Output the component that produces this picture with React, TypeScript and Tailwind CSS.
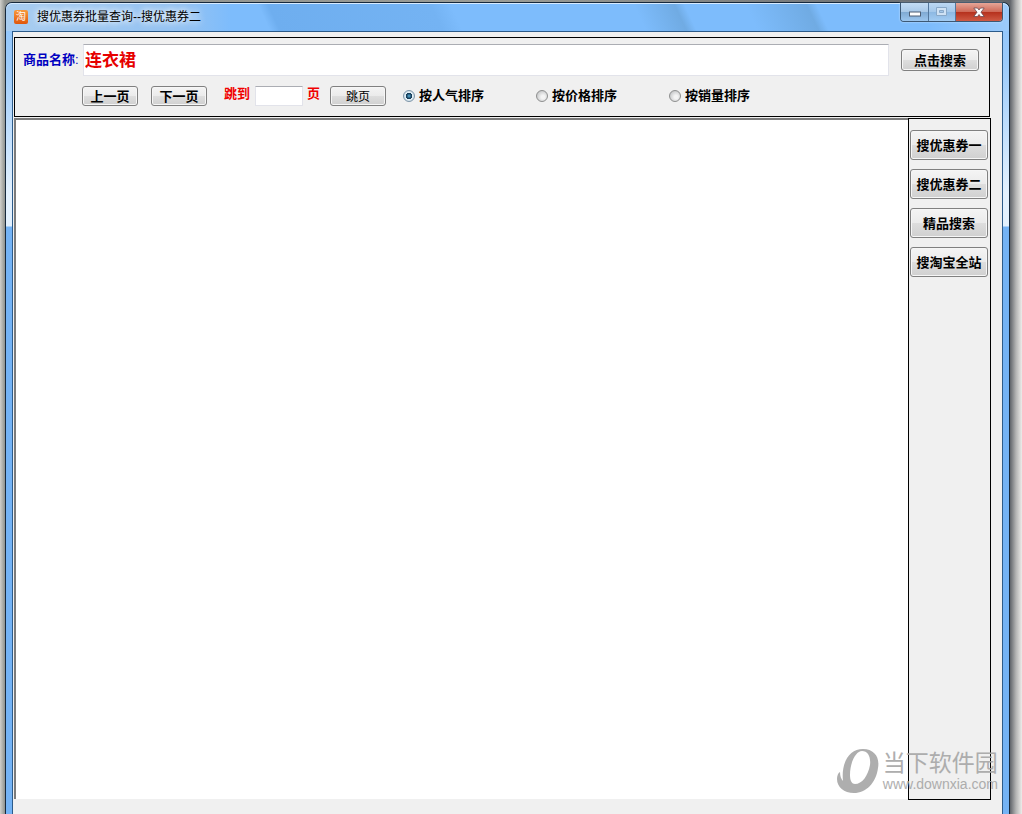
import { useState } from 'react';
import type { ReactNode } from 'react';

const SORT_OPTIONS = [
  { value: 'popularity', label: '按人气排序' },
  { value: 'price', label: '按价格排序' },
  { value: 'sales', label: '按销量排序' },
];

const SITES = ['搜优惠券一', '搜优惠券二', '精品搜索', '搜淘宝全站'];

// ── Classic push button ───────────────────────────────────────────────────────
function PushButton({ className, children }: { className: string; children: ReactNode }) {
  return (
    <button
      type="button"
      className={`flex shrink-0 items-center justify-center whitespace-nowrap rounded-[3px] border border-[#808080] bg-[linear-gradient(#f4f4f4,#ebebeb_50%,#dedede_50%,#d0d0d0)] pt-px leading-none text-black shadow-[inset_0_0_0_1px_#f6f6f6] ${className}`}
    >
      {children}
    </button>
  );
}

// ── Title bar ─────────────────────────────────────────────────────────────────
function TitleBar() {
  return (
    <header className="flex h-7 shrink-0 items-start">
      <span className="ml-2 mt-[7px] flex h-[14px] w-[14px] items-center justify-center rounded-[2px] bg-[linear-gradient(#f79a3e,#e0560a)] text-[10px] leading-none text-white">
        淘
      </span>
      <h1 className="ml-[9px] mt-[5px] flex-1 text-xs leading-[18px] text-black [text-shadow:0_0_6px_#fff,0_0_8px_#fff]">
        搜优惠券批量查询--搜优惠券二
      </h1>
      <div className="mr-[6px] flex h-[19px] w-[103px] overflow-hidden rounded-b-[4px] border border-t-0 border-[#3c5874] shadow-[0_0_2px_#d8ecff]">
        <button
          type="button"
          aria-label="最小化"
          className="flex w-7 items-center justify-center border-r border-[#54779c] bg-[linear-gradient(#c3dcf4,#a9c9e8_48%,#7fa9d2_50%,#9cc6ee)]"
        >
          <svg width="14" height="6" viewBox="0 0 14 6" className="mt-1">
            <rect x="1.5" y="1" width="11" height="4" fill="#fff" stroke="#4f5f75" />
          </svg>
        </button>
        <button
          type="button"
          aria-label="最大化"
          className="flex w-[27px] items-center justify-center border-r border-[#54779c] bg-[linear-gradient(#bcd8f3,#a4c8ea_48%,#8cb8e2_50%,#a3ccf2)]"
        >
          <svg width="12" height="10" viewBox="0 0 12 10">
            <path d="M.5.5h10v8H.5z M3.500 3.500h4v2h-4z" fill="#cfe2f4" fillRule="evenodd" stroke="#88a8c8" />
          </svg>
        </button>
        <button
          type="button"
          aria-label="关闭"
          className="flex flex-1 items-center justify-center bg-[linear-gradient(#e5a698,#cf6a58_48%,#b5301c_50%,#cf5a44)]"
        >
          <svg width="12" height="11" viewBox="0 0 12 11">
            <path
              d="M.8 1h3.700L6 3 7.500 1h3.700L8 5.200l3.200 4.300H7.500L6 7.500 4.500 9.500H.8L4 5.200z"
              fill="#fff"
              stroke="#6b4a50"
              strokeWidth=".8"
            />
          </svg>
        </button>
      </div>
    </header>
  );
}

// ── Search form ───────────────────────────────────────────────────────────────
function SearchPanel() {
  const [keyword, setKeyword] = useState('连衣裙');
  const [page, setPage] = useState('');
  const [sort, setSort] = useState('popularity');

  return (
    <form className="mr-3 h-20 shrink-0 border border-black pt-[6px]" onSubmit={e => e.preventDefault()}>
      <div className="flex items-center pl-2 pr-[10px]">
        <label htmlFor="keyword" className="w-[60px] whitespace-nowrap pb-px text-[13px] font-bold leading-4 text-[#0000c0]">
          商品名称<span className="font-normal">:</span>
        </label>
        <input
          id="keyword"
          value={keyword}
          onChange={e => setKeyword(e.target.value)}
          className="h-8 min-w-0 flex-1 border border-[#e2e3ea] border-t-[#abadb3] bg-white px-px pb-[3px] text-[17px] font-bold text-[#e60000] outline-none"
        />
        <PushButton className="ml-3 h-[22px] w-[78px] text-[13px] font-bold">点击搜索</PushButton>
      </div>

      <div className="mt-[10px] flex items-center pl-[67px] text-[13px] font-bold">
        <PushButton className="h-5 w-14">上一页</PushButton>
        <PushButton className="ml-[13px] h-5 w-14">下一页</PushButton>
        <label htmlFor="page" className="ml-[17px] pb-1 leading-4 text-[#f00000]">
          跳到
        </label>
        <input
          id="page"
          value={page}
          onChange={e => setPage(e.target.value)}
          className="ml-[5px] h-5 w-12 border border-[#e2e3ea] border-t-[#abadb3] bg-white px-1 text-xs font-normal outline-none"
        />
        <span className="ml-1 pb-1 leading-4 text-[#f00000]">页</span>
        <PushButton className="ml-[10px] h-5 w-14 text-xs font-normal">跳页</PushButton>
        <div role="radiogroup" aria-label="排序" className="ml-[17px] flex">
          {SORT_OPTIONS.map(option => (
            <label key={option.value} className="flex w-[133px] items-center gap-1 whitespace-nowrap leading-4 text-black">
              <input
                type="radio"
                name="sort"
                value={option.value}
                checked={sort === option.value}
                onChange={() => setSort(option.value)}
                className="h-3 w-3 appearance-none rounded-full border border-[#8e8f8f] bg-[radial-gradient(circle_at_60%_60%,#f4f4f4_20%,#b4b6b8)] checked:border-[#7d95a8] checked:bg-[radial-gradient(circle,#5fb4dc_0,#173f5c_34%,#173f5c_42%,#e4eff6_50%,#b5cbd8_100%)]"
              />
              {option.label}
            </label>
          ))}
        </div>
      </div>
    </form>
  );
}

// ── Site watermark ────────────────────────────────────────────────────────────
function Watermark() {
  return (
    <div className="pointer-events-none absolute bottom-5 right-1 flex items-center gap-1 text-[#a6a6a6] opacity-90">
      <svg width="42" height="46" viewBox="0 0 42 46" fill="currentColor">
        <path
          fillRule="evenodd"
          d="M26 1C37 1 43 9 41 20 39 35 29 45 17 45 7 45 0 39 0 31 0 28 1 25 3 24 3 28 4 31 6 33 4 15 12 1 26 1z M25 3C19 3 13 14 13 27 13 33 15 36 18 36 25 36 31 28 33 17 34 9 31 3 25 3z"
        />
      </svg>
      <div className="whitespace-nowrap">
        <p className="text-[23px] font-normal leading-[26px]">当下软件园</p>
        <p className="text-sm leading-4">www.downxia.com</p>
      </div>
    </div>
  );
}

export default function App() {
  return (
    <div className="flex h-screen overflow-hidden bg-[linear-gradient(90deg,#d0d0cc,#8f928e_5px,#9a9c96_50%,#60646a_calc(100%_-_12px),#b4b4b4_calc(100%_-_6px),#ececea)] pl-[5px] pr-3 pt-[2px] font-['Liberation_Sans','Noto_Sans_CJK_SC',sans-serif]">
      <div className="flex min-w-0 flex-1 flex-col rounded-t-[7px] border border-b-0 border-[#17293c] bg-[linear-gradient(#8fc5fb,#9ccbfb_60px,#e3f1fe_190px,#e3f1fe_223px,#74b3f5_224px)] shadow-[inset_0_1px_0_#d7ebff]">
        <div className="rounded-t-[6px] bg-[linear-gradient(90deg,#a9cdf0,#93c2f2_180px,transparent_225px),linear-gradient(65deg,transparent_26%,#6eaeef_27%,#74b3f3_43%,transparent_45%,transparent_63%,#70abe3_67%,transparent_68%,transparent_74%,#70abe3_80%,transparent_81%),linear-gradient(90deg,#7dbcfc_92%,#9ccbfb)] shadow-[inset_0_1px_0_#d7ebff]">
          <TitleBar />
        </div>
        <main className="relative mx-[6px] flex min-h-0 flex-1 flex-col border border-b-0 border-[#2c5b8a] bg-[#f0f0f0] pl-px pt-[5px]">
          <SearchPanel />
          <div className="mr-[11px] mt-px flex min-h-0 flex-1 pb-[14px]">
            <section className="mb-px min-w-0 flex-1 border-l-2 border-t-2 border-[#7c7c7c] bg-white" />
            <nav className="flex w-[83px] shrink-0 flex-col items-start gap-[9px] border border-black pl-px pt-[11px]">
              {SITES.map(site => (
                <PushButton key={site} className="h-[30px] w-[78px] text-[13px] font-bold">
                  {site}
                </PushButton>
              ))}
            </nav>
          </div>
          <Watermark />
        </main>
      </div>
    </div>
  );
}
